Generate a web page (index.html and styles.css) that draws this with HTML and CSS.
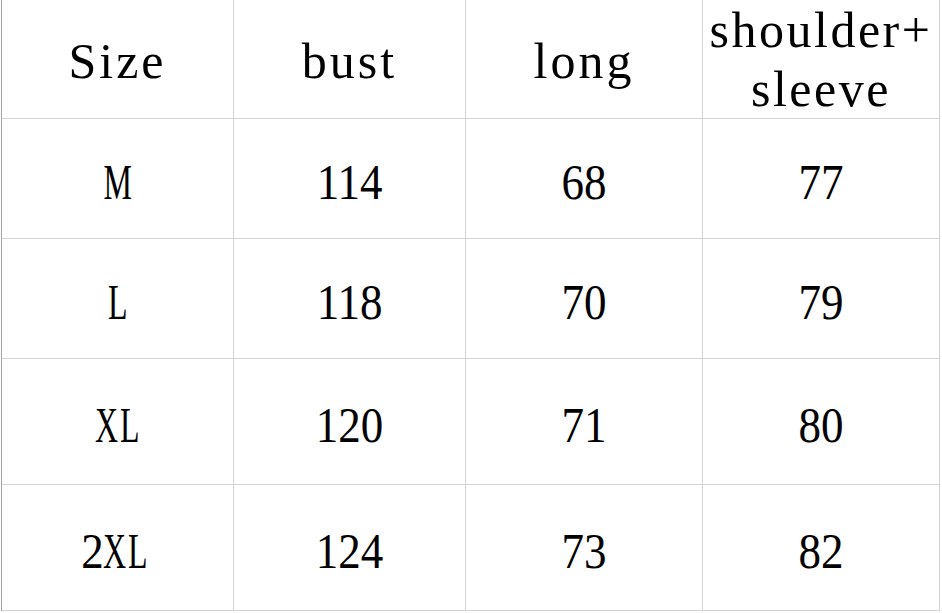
FILE: index.html
```html
<!DOCTYPE html>
<html>
<head>
<meta charset="utf-8">
<link rel="stylesheet" href="styles.css">
</head>
<body>
<div class="sheet">
  <div class="cell head">Size</div>
  <div class="cell head">bust</div>
  <div class="cell head">long</div>
  <div class="cell head two">shoulder+<br>sleeve</div>

  <div class="cell"><span class="cap">M</span></div>
  <div class="cell"><span class="num">114</span></div>
  <div class="cell"><span class="num">68</span></div>
  <div class="cell"><span class="num">77</span></div>

  <div class="cell"><span class="cap">L</span></div>
  <div class="cell"><span class="num">118</span></div>
  <div class="cell"><span class="num">70</span></div>
  <div class="cell"><span class="num">79</span></div>

  <div class="cell"><span class="cap">XL</span></div>
  <div class="cell"><span class="num">120</span></div>
  <div class="cell"><span class="num">71</span></div>
  <div class="cell"><span class="num">80</span></div>

  <div class="cell"><span class="num">2</span><span class="cap">XL</span></div>
  <div class="cell"><span class="num">124</span></div>
  <div class="cell"><span class="num">73</span></div>
  <div class="cell"><span class="num">82</span></div>
</div>
</body>
</html>
```
FILE: styles.css
```css
html, body {
  margin: 0;
  padding: 0;
  background: #ffffff;
}
.sheet {
  margin-left: 1px;
  display: grid;
  grid-template-columns: 231px 231px 236px 236px;
  grid-template-rows: 118px 119px 119px 125px 125px;
  gap: 1px;
  width: max-content;
  background: #d4d4d4;
  border-left: 1px solid #a3a3a3;
  padding: 0 1px 1px 0;
  font-family: "Liberation Serif", "Times New Roman", serif;
  font-size: 50px;
  color: #000;
}
.cell {
  background: #fff;
  display: flex;
  align-items: center;
  justify-content: center;
  text-align: center;
  padding-top: 6px;
  box-sizing: border-box;
}
.head {
  letter-spacing: 3px;
  padding-top: 4px;
}
.two {
  line-height: 59px;
  letter-spacing: 2.5px;
  padding-top: 2px;
}
.num {
  display: inline-block;
  transform: scaleX(0.9);
  margin: 0 -2px;
}
.cap {
  display: inline-block;
  transform: scaleX(0.64);
  letter-spacing: 3px;
  margin: 0 -9px 0 -7px;
}
.num + .cap {
  margin-left: -13px;
}
```
